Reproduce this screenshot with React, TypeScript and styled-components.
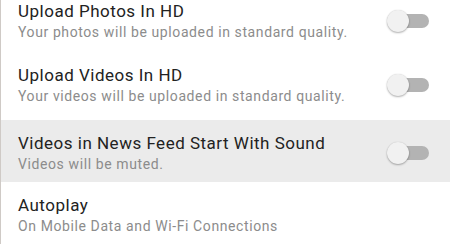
import React from 'react';
import styled, { createGlobalStyle } from 'styled-components';

const GlobalStyle = createGlobalStyle`
  html, body {
    margin: 0;
    padding: 0;
    background: #fff;
    overflow: hidden;
  }
  body {
    font-family: Roboto, 'Noto Sans', 'Liberation Sans', sans-serif;
  }
`;

const Screen = styled.div`
  width: 450px;
  height: 244px;
  overflow: hidden;
  border-left: 1px solid #cfcac6;
  box-sizing: border-box;
  background: #fff;
`;

const List = styled.div`
  margin-top: -12px;
  display: flex;
  flex-direction: column;
`;

const Row = styled.div<{ $pb: number; $active?: boolean }>`
  display: flex;
  align-items: center;
  padding: 12px 21px ${(p) => p.$pb}px 17px;
  background: ${(p) => (p.$active ? '#ebebeb' : '#fff')};
`;

const Text = styled.div`
  flex: 1;
  min-width: 0;
`;

const Title = styled.div`
  font-size: 17px;
  line-height: 23px;
  letter-spacing: 0.5px;
  color: #222;
  white-space: nowrap;
`;

const Subtitle = styled.div`
  font-size: 14px;
  line-height: 18px;
  letter-spacing: 0.6px;
  color: #8c8c8c;
  white-space: nowrap;
`;

const Switch = styled.div`
  position: relative;
  width: 42px;
  height: 22px;
  flex-shrink: 0;
`;

const Track = styled.div`
  position: absolute;
  left: 9px;
  right: 0;
  top: 4px;
  height: 14px;
  border-radius: 7px;
  background: #b3b3b3;
`;

const Knob = styled.div`
  position: absolute;
  left: 0;
  top: 0;
  width: 22px;
  height: 22px;
  border-radius: 50%;
  background: #f1f1f1;
  box-shadow: 0 1px 2px rgba(0, 0, 0, 0.3), 0 0 1px rgba(0, 0, 0, 0.15);
`;

const rows = [
  {
    title: 'Upload Photos In HD',
    sub: 'Your photos will be uploaded in standard quality.',
    toggle: true,
    pb: 11,
  },
  {
    title: 'Upload Videos In HD',
    sub: 'Your videos will be uploaded in standard quality.',
    toggle: true,
    pb: 15,
  },
  {
    title: 'Videos in News Feed Start With Sound',
    sub: 'Videos will be muted.',
    toggle: true,
    pb: 9,
    active: true,
  },
  {
    title: 'Autoplay',
    sub: 'On Mobile Data and Wi-Fi Connections',
    toggle: false,
    pb: 12,
  },
];

const App: React.FC = () => {
  return (
    <Screen>
      <GlobalStyle />
      <List>
        {rows.map((row) => (
          <Row key={row.title} $pb={row.pb} $active={row.active}>
            <Text>
              <Title>{row.title}</Title>
              <Subtitle>{row.sub}</Subtitle>
            </Text>
            {row.toggle && (
              <Switch>
                <Track />
                <Knob />
              </Switch>
            )}
          </Row>
        ))}
      </List>
    </Screen>
  );
};

export default App;
